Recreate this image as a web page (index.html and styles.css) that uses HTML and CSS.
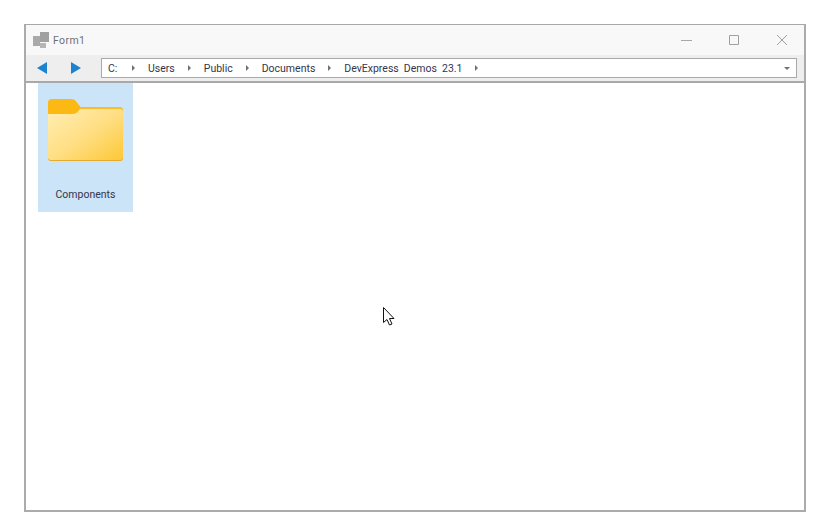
FILE: index.html
```html
<!DOCTYPE html>
<html lang="en">
<head>
<meta charset="utf-8">
<title>Form1</title>
<link rel="stylesheet" href="styles.css">
</head>
<body>
<div class="window">
  <header class="titlebar">
    <svg class="app-icon" width="17" height="16" viewBox="0 0 17 16"><path d="M0 4h7v10H0z" fill="#a9a9a9"/><path d="M7 0h9v10H7z" fill="#a0a0a0"/><path d="M7 11h6v5H7z" fill="#b5b5b5"/></svg>
    <span class="title">Form1</span>
    <div class="controls">
      <svg class="ctl" width="48" height="14" viewBox="0 0 48 14"><path d="M19 7.500h11" stroke="#a8a8a8"/></svg>
      <svg class="ctl" width="48" height="14" viewBox="0 0 48 14"><path d="M19.500 2.500h9v9h-9z" fill="none" stroke="#a0a0a0"/></svg>
      <svg class="ctl" width="48" height="14" viewBox="0 0 48 14"><path d="M19 2l10 10M29 2L19 12" fill="none" stroke="#a0a0a0"/></svg>
    </div>
  </header>
  <div class="toolbar">
    <button class="nav nav-back"><svg width="10" height="12" viewBox="0 0 10 12"><path d="M10 0v12L0 6z" fill="#1b83cf"/></svg></button>
    <button class="nav nav-fwd"><svg width="10" height="12" viewBox="0 0 10 12"><path d="M0 0v12l10-6z" fill="#1b83cf"/></svg></button>
    <div class="crumbs">
      <span class="crumb crumb-drive">C:</span><i class="sep"></i>
      <span class="crumb">Users</span><i class="sep"></i>
      <span class="crumb">Public</span><i class="sep"></i>
      <span class="crumb">Documents</span><i class="sep"></i>
      <span class="crumb">DevExpress Demos 23.1</span><i class="sep"></i>
      <i class="drop"></i>
    </div>
  </div>
  <main class="content">
    <div class="item">
      <svg class="folder" width="75" height="62" viewBox="0 0 76 62" preserveAspectRatio="none">
        <defs>
          <linearGradient id="front" x1="0" y1="0" x2="1" y2="1"><stop offset="0" stop-color="#ffeeb4"/><stop offset="0.5" stop-color="#ffdf85"/><stop offset="1" stop-color="#fdc835"/></linearGradient>
        </defs>
        <path d="M0 4a4 4 0 0 1 4-4h20q3 0 5 3l4 5h39a4 4 0 0 1 4 4v20H0z" fill="#fdb913"/>
        <path d="M0 15h25q3 0 5-2l3-4h39a4 4 0 0 1 4 4v45a4 4 0 0 1-4 4H4a4 4 0 0 1-4-4z" fill="url(#front)"/>
        <path d="M33 8h39a4 4 0 0 1 4 4v1a3 3 0 0 0-3-3H32z" fill="#f8bd2b"/>
        <path d="M0 58a3 3 0 0 0 3 3h70a3 3 0 0 0 3-3v1a3 3 0 0 1-3 3H3a3 3 0 0 1-3-3z" fill="#e6ab2a"/>
      </svg>
      <span class="label">Components</span>
    </div>
  </main>
  <svg class="cursor" width="14" height="21" viewBox="0 0 14 21"><path d="M1.500 1.500v15l3.500-3 2.500 5.500 2.500-1-2.500-5.500h4.500z" fill="#fff" stroke="#111" stroke-width="1"/></svg>
</div>
</body>
</html>
```
FILE: styles.css
```css
* { box-sizing: border-box; }
html, body { margin: 0; height: 100%; background: #fff; }
body { padding: 24px 26px 20px 24px; font-family: "Roboto", sans-serif; font-size: 10.5px; word-spacing: 2.5px; color: #35354d; }
.window { position: relative; width: 782px; height: 488px; border: 2px solid #ababab; border-top-width: 1px; border-top-color: #a8a8a8; background: #fff; display: flex; flex-direction: column; }
.titlebar { height: 30px; flex: none; background: #f8f8f9; display: flex; align-items: center; padding-left: 7px; }
.app-icon { flex: none; margin-right: 3px; }
.title { color: #70707a; letter-spacing: 0.4px; }
.controls { margin-left: auto; display: flex; margin-right: -2px; margin-bottom: 1px; }
.toolbar { height: 28px; flex: none; background: #eeeeef; border-bottom: 2px solid #a9a9a9; display: flex; align-items: flex-start; padding-top: 3px; padding-right: 7px; }
.nav { height: 20px; padding: 0; background: none; border: 0; display: flex; align-items: center; justify-content: center; }
.nav-back { width: 32px; }
.nav-fwd { width: 36px; }
.crumbs { flex: 1; height: 20px; margin-left: 7px; background: #fff; border: 1px solid #a9a9a9; display: flex; align-items: center; padding-left: 6px; padding-right: 6px; }
.crumb { white-space: nowrap; }
.crumb-drive { width: 11px; }
.sep { width: 0; height: 0; margin: 0 13px; border-left: 3px solid #6f6f6f; border-top: 3px solid transparent; border-bottom: 3px solid transparent; }
.drop { margin-left: auto; width: 0; height: 0; border-top: 3px solid #707070; border-left: 3px solid transparent; border-right: 3px solid transparent; }
.content { flex: 1; padding-left: 12px; }
.item { width: 95px; height: 129px; background: #cbe4f7; display: flex; flex-direction: column; align-items: center; padding-top: 16px; }
.folder { flex: none; display: block; }
.label { margin-top: 27px; }
.cursor { position: absolute; left: 356px; top: 281px; }
```
